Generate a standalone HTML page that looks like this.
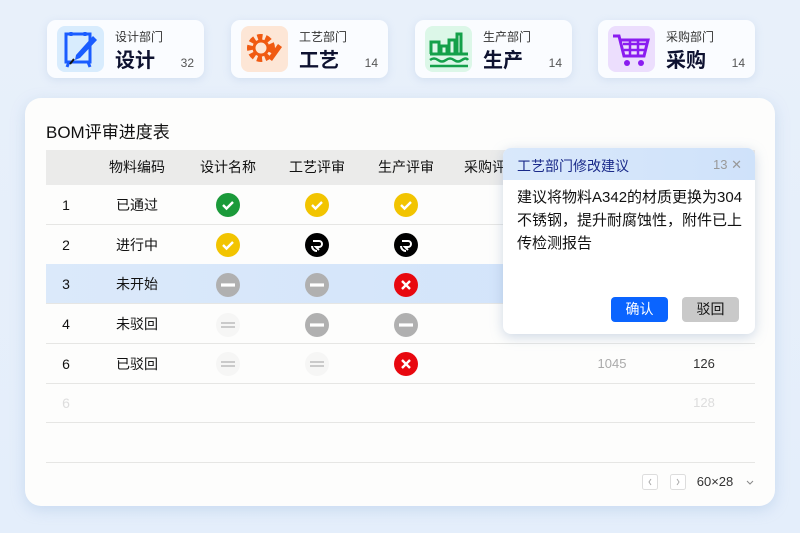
<!DOCTYPE html>
<html><head><meta charset="utf-8"><style>
*{margin:0;padding:0;box-sizing:border-box}
body{width:800px;height:533px;overflow:hidden;background:linear-gradient(180deg,#e8f0fa,#e4eefb);font-family:"Liberation Sans","Noto Sans CJK SC",sans-serif;position:relative;color:#111}
.card{position:absolute;top:20px;width:157px;height:58px;background:#fafcff;border-radius:9px;box-shadow:0 2px 8px rgba(150,180,220,.25)}
.ic{position:absolute;left:10px;top:6px;width:47px;height:46px;border-radius:8px}
.sub{position:absolute;left:68px;top:8px;font-size:12px;color:#333}
.big{position:absolute;left:68px;top:24px;font-size:20px;font-weight:bold;color:#0e1230}
.num{position:absolute;right:10px;top:36px;font-size:12px;color:#555}
.panel{position:absolute;left:25px;top:98px;width:750px;height:408px;background:#fdfdfc;border-radius:16px;box-shadow:0 4px 14px rgba(150,180,220,.35)}
.title{position:absolute;left:46px;top:118px;font-size:17px;color:#111}
.hdr{position:absolute;left:46px;top:150px;width:709px;height:35px;background:#ebebea}
.row{position:absolute;left:46px;width:709px;height:40px;border-bottom:1px solid #e6e6e4}
.t{position:absolute;font-size:14px;line-height:20px;transform:translateX(-50%);white-space:nowrap}
.pop{position:absolute;left:503px;top:148px;width:252px;height:186px;background:#fff;border-radius:8px;box-shadow:0 3px 12px rgba(120,150,190,.35);overflow:hidden}
.poph{height:32px;background:linear-gradient(90deg,#d9e8fb,#cfe2fa)}
.btn{position:absolute;top:149px;width:57px;height:25px;border-radius:4px;font-size:14px;text-align:center;line-height:25px}
</style></head><body>
<div class="card" style="left:47px"><div class="ic" style="background:#d8ecfd">
<svg width="47" height="46" viewBox="0 0 47 46"><rect x="9" y="8" width="24" height="28" fill="none" stroke="#1a5cff" stroke-width="3"/><path d="M14 6v4M28 6v4M12 36l-2 5M31 36l2 5" stroke="#1a5cff" stroke-width="3"/><path d="M36 10l4 4-17 18-5 2 1-5z" fill="#1a5cff"/><path d="M17 33l-4 5" stroke="#111" stroke-width="2"/></svg></div>
<div class="sub">设计部门</div><div class="big">设计</div><div class="num">32</div></div>
<div class="card" style="left:231px"><div class="ic" style="background:#fde6d6">
<svg width="47" height="46" viewBox="0 0 47 46"><circle cx="20" cy="22" r="11" fill="none" stroke="#f05a12" stroke-width="6" stroke-dasharray="5 3"/><circle cx="20" cy="22" r="7" fill="none" stroke="#f05a12" stroke-width="3"/><path d="M27 32l10-14 4 3-10 14z" fill="#f05a12"/></svg></div>
<div class="sub">工艺部门</div><div class="big">工艺</div><div class="num">14</div></div>
<div class="card" style="left:415px"><div class="ic" style="background:#dcf7e8">
<svg width="47" height="46" viewBox="0 0 47 46"><path d="M5 28h38M6 28V16h8v12M16 28V20h6v8M24 28V14h6v14M32 28V8h4v20" fill="none" stroke="#14a04a" stroke-width="3"/><path d="M5 34q4-3 8 0t8 0 8 0 8 0 6 0" fill="none" stroke="#14a04a" stroke-width="2.5"/><path d="M5 40h38" stroke="#14a04a" stroke-width="2.5"/></svg></div>
<div class="sub">生产部门</div><div class="big">生产</div><div class="num">14</div></div>
<div class="card" style="left:598px"><div class="ic" style="background:#ecdefd">
<svg width="47" height="46" viewBox="0 0 47 46"><path d="M5 10h6l5 20h20l4-16H13" fill="none" stroke="#8a1cf0" stroke-width="3"/><path d="M15 18h25M16 24h22M22 14v16M30 14v16" stroke="#8a1cf0" stroke-width="2.5"/><circle cx="19" cy="37" r="3" fill="#8a1cf0"/><circle cx="33" cy="37" r="3" fill="#8a1cf0"/></svg></div>
<div class="sub">采购部门</div><div class="big">采购</div><div class="num">14</div></div>

<div class="panel"></div>
<div class="title">BOM评审进度表</div>
<div class="hdr"></div>
<div class="t" style="left:137px;top:157px">物料编码</div>
<div class="t" style="left:228px;top:157px">设计名称</div>
<div class="t" style="left:317px;top:157px">工艺评审</div>
<div class="t" style="left:406px;top:157px">生产评审</div>
<div class="t" style="left:492px;top:157px">采购评审</div>

<div class="row" style="top:185px"></div>
<div class="row" style="top:225px"></div>
<div class="row" style="top:264px;background:linear-gradient(90deg,#dbe9fa,#cfe2fb)"></div>
<div class="row" style="top:304px"></div>
<div class="row" style="top:344px"></div>
<div class="row" style="top:383px"></div>
<div class="row" style="top:423px"></div>

<div class="t" style="left:66px;top:195px">1</div><div class="t" style="left:137px;top:195px">已通过</div>
<div class="t" style="left:66px;top:235px">2</div><div class="t" style="left:137px;top:235px">进行中</div>
<div class="t" style="left:66px;top:274px">3</div><div class="t" style="left:137px;top:274px">未开始</div>
<div class="t" style="left:66px;top:314px">4</div><div class="t" style="left:137px;top:314px">未驳回</div>
<div class="t" style="left:66px;top:354px">6</div><div class="t" style="left:137px;top:354px">已驳回</div>
<div class="t" style="left:66px;top:393px;color:#ddd">6</div>
<div class="t" style="left:612px;top:354px;color:#aaa;font-size:13px">1045</div>
<div class="t" style="left:704px;top:354px;color:#333;font-size:13px">126</div>
<div class="t" style="left:704px;top:393px;color:#ddd;font-size:13px">128</div>

<svg style="position:absolute;left:0;top:0" width="800" height="533">
<defs>
<g id="ok"><path d="M-5 0l3.5 3.5L5-3" fill="none" stroke="#fff" stroke-width="2.4"/></g>
<g id="mn"><rect x="-7" y="-1.6" width="14" height="3.2" fill="#fff"/></g>
<g id="x"><path d="M-4-4l8 8M4-4l-8 8" stroke="#fff" stroke-width="2.4"/></g>
<g id="eq"><path d="M-7-2h14M-7 2h14" stroke="#bbb" stroke-width="1.6"/></g>
<g id="sp"><circle r="12" fill="#000"/><path d="M-4-4h6a3 3 0 0 1 0 6h-3l3 3M-5 1a5 5 0 0 0 5 5" fill="none" stroke="#fff" stroke-width="2"/></g>
</defs>
<g transform="translate(228,205)"><circle r="12" fill="#1b9a3a"/><use href="#ok"/></g>
<g transform="translate(317,205)"><circle r="12" fill="#f2c400"/><use href="#ok"/></g>
<g transform="translate(406,205)"><circle r="12" fill="#f2c400"/><use href="#ok"/></g>
<g transform="translate(228,245)"><circle r="12" fill="#f2c400"/><use href="#ok"/></g>
<use href="#sp" transform="translate(317,245)"/><use href="#sp" transform="translate(406,245)"/>
<g transform="translate(228,285)"><circle r="12" fill="#b0b0b0"/><use href="#mn"/></g>
<g transform="translate(317,285)"><circle r="12" fill="#b0b0b0"/><use href="#mn"/></g>
<g transform="translate(406,285)"><circle r="12" fill="#e8080f"/><use href="#x"/></g>
<g transform="translate(228,325)"><circle r="12" fill="#f6f6f5"/><use href="#eq"/></g>
<g transform="translate(317,325)"><circle r="12" fill="#b0b0b0"/><use href="#mn"/></g>
<g transform="translate(406,325)"><circle r="12" fill="#b0b0b0"/><use href="#mn"/></g>
<g transform="translate(228,364)"><circle r="12" fill="#f6f6f5"/><use href="#eq"/></g>
<g transform="translate(317,364)"><circle r="12" fill="#f6f6f5"/><use href="#eq"/></g>
<g transform="translate(406,364)"><circle r="12" fill="#e8080f"/><use href="#x"/></g>
<rect x="642.5" y="474.5" width="15" height="15" rx="2" fill="#fff" stroke="#ddd"/><path d="M651 479l-2 3 2 3" fill="none" stroke="#aaa"/>
<rect x="670.5" y="474.5" width="15" height="15" rx="2" fill="#fff" stroke="#ddd"/><path d="M677 479l2 3-2 3" fill="none" stroke="#aaa"/>
<path d="M747 481l3 3 3-3" fill="none" stroke="#888"/>
</svg>
<div class="t" style="left:715px;top:472px;font-size:13px;color:#333">60×28</div>

<div class="pop"><div class="poph"></div>
<div style="position:absolute;left:14px;top:8px;font-size:14px;color:#1a2a8a">工艺部门修改建议</div>
<div style="position:absolute;left:210px;top:9px;font-size:13px;color:#999">13 ✕</div>
<div style="position:absolute;left:14px;top:38px;width:228px;font-size:15px;line-height:23px;color:#111">建议将物料A342的材质更换为304<br>不锈钢，提升耐腐蚀性，附件已上<br>传检测报告</div>
<div class="btn" style="left:108px;background:#0a64ff;color:#fff">确认</div>
<div class="btn" style="left:179px;background:#c9c9c9;color:#111">驳回</div>
</div>
</body></html>
